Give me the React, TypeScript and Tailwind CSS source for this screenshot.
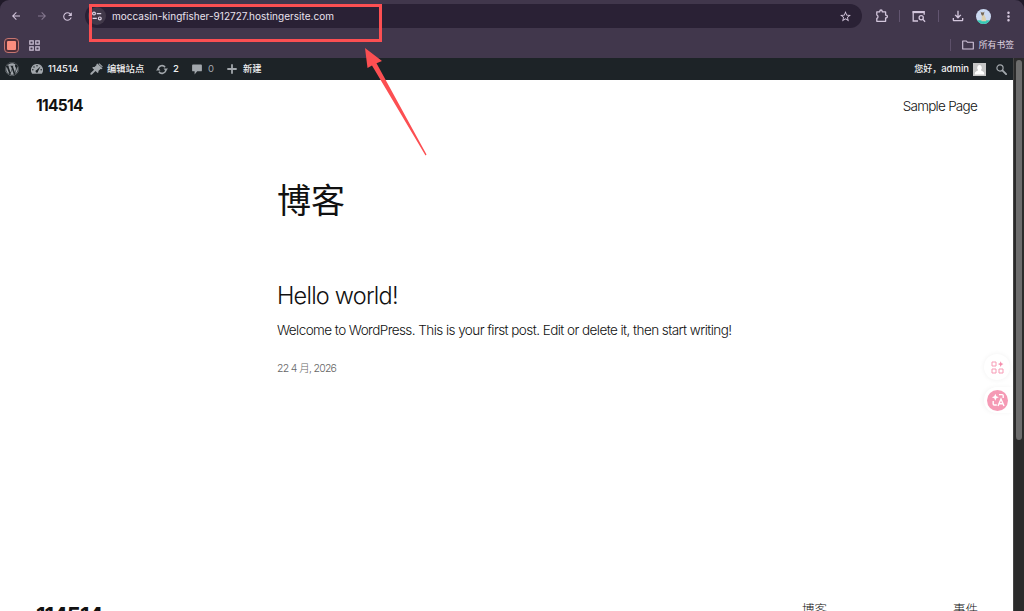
import type { ReactNode } from "react";
import { FaWordpress } from "react-icons/fa";
import {
  MdArrowBack,
  MdArrowForward,
  MdMoreVert,
  MdOutlineFileDownload,
  MdRefresh,
  MdStarBorder,
} from "react-icons/md";

const Slot = ({ className, children }: { className: string; children?: ReactNode }) => (
  <div className={`flex shrink-0 items-center justify-center ${className}`}>{children}</div>
);

const TuneIcon = () => (
  <svg width="10" height="10" viewBox="0 0 10 10" fill="none" stroke="#ddd3e4" strokeWidth="1.2">
    <circle cx="2" cy="2.6" r="1.4" />
    <path d="M4.8 2.6h4.4M.6 7.4h4.2" />
    <circle cx="7.8" cy="7.4" r="1.4" />
  </svg>
);

const ExtensionIcon = () => (
  <svg width="14" height="14" viewBox="0 0 14 14" fill="none" stroke="#d3c6dc" strokeWidth="1.3" strokeLinejoin="round">
    <path d="M1.8 2.8h3V2.2a1.2 1.2 0 0 1 2.4 0v.6h3.4v3.4h.4a1.4 1.4 0 0 1 0 2.8h-.4v3.3H1.8V9.4a1.8 1.8 0 0 0 0-3.4z" />
  </svg>
);

const SidePanelIcon = () => (
  <svg width="14" height="13" viewBox="0 0 14 13" fill="none" stroke="#d3c6dc" strokeWidth="1.3">
    <path d="M6 11H1.2V1.7h11v3" />
    <path d="M.6 2.2h11.6" strokeWidth="1.9" />
    <circle cx="9.2" cy="7.8" r="2.1" />
    <path d="M10.7 9.3l2.4 2.4" />
  </svg>
);

const AvatarIcon = () => (
  <svg width="15" height="15" viewBox="0 0 15 15">
    <clipPath id="face">
      <circle cx="7.5" cy="7.5" r="7.5" />
    </clipPath>
    <g clipPath="url(#face)">
      <rect width="15" height="15" fill="#cbd9f1" />
      <rect y="11.3" width="15" height="4" fill="#34c9b4" />
      <path d="M5.2 3.6h2.6l.4 2.2 1.6 3.4.4 3H5.4L5.8 7z" fill="#ddd0ae" />
      <path d="M4.6 2.6l1 .9h1.800l1-.9-.4 2.400-.9 1.600H6l-.9-1.600z" fill="#74685a" />
    </g>
  </svg>
);

const GridIcon = () => (
  <svg width="11" height="11" viewBox="0 0 11 11" fill="none" stroke="#cfc3d8" strokeWidth="1.2">
    <path d="M.8.8h3.4v3.4H.8zM6.8.8h3.4v3.4H6.8zM.8 6.8h3.4v3.4H.8zM6.8 6.8h3.4v3.4H6.8z" />
  </svg>
);

const FolderIcon = () => (
  <svg width="12" height="10" viewBox="0 0 12 10" fill="none" stroke="#d3c6dc" strokeWidth="1.1" strokeLinejoin="round">
    <path d="M.7 1h3.7l1.1 1.3h5.8V9H.7z" />
  </svg>
);

const DashboardIcon = () => (
  <svg width="12" height="10" viewBox="0 0 12 10">
    <path d="M6 0a6 6 0 0 1 5 9.4q-.3.4-.8.4H1.8q-.5 0-.8-.4A6 6 0 0 1 6 0z" fill="#a2a7ac" />
    <g fill="#1d2327">
      <circle cx="6" cy="1.7" r=".75" />
      <circle cx="3" cy="3" r=".75" />
      <circle cx="1.8" cy="5.8" r=".75" />
      <circle cx="10.2" cy="5.8" r=".75" />
      <path d="M9.5 2.4L7.1 7.2a1.3 1.3 0 1 1-1.5-1.1z" />
    </g>
  </svg>
);

const BrushIcon = () => (
  <svg width="13" height="12" viewBox="0 0 13 12" fill="#a2a7ac">
    <path d="M7.3.4l5.2 4.9-1 .9-1-.2-2.1 2.1.1 1.2-.9.8-2.1-2L2 11.4q-1 .6-1.5.1t.1-1.5l3.5-3.3L2.2 4.8l.9-.8 1.4.1L6.6 2 6.4 1.2z" />
    <path d="M9.3.2L12.8 3.6l-.7.7L8.5.9z" />
  </svg>
);

const UpdateIcon = () => (
  <svg width="12" height="11" viewBox="0 0 12 11">
    <path d="M2.2 5A3.8 3.8 0 0 1 9.1 3.3M9.8 6A3.8 3.8 0 0 1 2.9 7.7" fill="none" stroke="#a2a7ac" strokeWidth="1.5" />
    <path d="M7.5 4.6h4.5L9.8 7.2zM0 6.4h4.5L2.2 3.8z" fill="#a2a7ac" />
  </svg>
);

const CommentIcon = () => (
  <svg width="10" height="11" viewBox="0 0 10 11" fill="#a2a7ac">
    <path d="M1 .5h8q.9 0 .9.9v5q0 .9-.9.9H5.2L2.6 10.4V7.3H1q-.9 0-.9-.9v-5Q.1.5 1 .5z" />
  </svg>
);

const PlusIcon = () => (
  <svg width="10" height="10" viewBox="0 0 10 10" stroke="#a2a7ac" strokeWidth="1.8">
    <path d="M5 .3v9.4M.3 5h9.4" />
  </svg>
);

const SearchIcon = () => (
  <svg width="11" height="11" viewBox="0 0 11 11" fill="none" stroke="#a2a7ac">
    <circle cx="4" cy="4" r="3.1" strokeWidth="1.2" />
    <path d="M6.4 6.4l3.7 3.7" strokeWidth="1.9" strokeLinecap="round" />
  </svg>
);

const UserIcon = () => (
  <svg width="13" height="13" viewBox="0 0 13 13">
    <rect width="13" height="13" fill="#c5c5c5" />
    <path d="M6.5 2a2.4 2.8 0 0 1 1.4 5q.2 1 2.1 1.4 1.3.4 1.3 3.1H1.7q0-2.7 1.3-3.1Q4.9 8 5.1 7A2.4 2.8 0 0 1 6.5 2z" fill="#fff" />
  </svg>
);

const AppsIcon = () => (
  <svg width="13" height="13" viewBox="0 0 13 13" fill="none" stroke="#f79ab5" strokeWidth="1">
    <path d="M1 1h4v4H1zM1 8h4v4H1zM8 8h4v4H8z" strokeLinejoin="round" />
    <path d="M9.7.3l.8 2 2 .8-2 .8-.8 2-.8-2-2-.8 2-.8z" fill="#f58cab" stroke="none" />
  </svg>
);

const TranslateIcon = () => (
  <svg width="16" height="16" viewBox="0 0 16 16" fill="none" stroke="#fff" strokeWidth="1.4">
    <path d="M5.3 1.8l1.1 2.5 2.4 1-2.4 1-1.1 2.5-1-2.5-2.5-1 2.5-1z" fill="#fff" stroke="none" />
    <path d="M9 2.6h3.2q1 0 1 1V6M3.2 9v3q0 1 1 1h2.6" />
    <path d="M8 14l3-7 3 7M9.2 11.7h3.7" />
  </svg>
);

const Toolbar = () => (
  <div className="flex h-8 items-center text-[#d3c6dc]">
    <Slot className="w-8"><MdArrowBack size={12} /></Slot>
    <Slot className="w-[19px] text-[#85788f]"><MdArrowForward size={12} /></Slot>
    <Slot className="w-[31px] pl-px"><MdRefresh size={13} /></Slot>
    <div className="ml-[3px] flex h-6 w-[777px] shrink-0 items-center rounded-full bg-[#2a2135]">
      <Slot className="ml-[3px] size-[18px] rounded-full bg-[#413849]"><TuneIcon /></Slot>
      <span className="ml-1.5 text-[10px] leading-4 tracking-[0.02px] whitespace-nowrap text-[#e9e1ee]">
        moccasin-kingfisher-912727.hostingersite.com
      </span>
      <MdStarBorder size={13} className="mr-2.5 ml-auto" />
    </div>
    <Slot className="ml-[5px] w-[30px]"><ExtensionIcon /></Slot>
    <div className="ml-0.5 h-3 w-px bg-[#625570]" />
    <Slot className="w-[38px]"><SidePanelIcon /></Slot>
    <div className="h-3 w-px bg-[#625570]" />
    <Slot className="w-[37px]"><MdOutlineFileDownload size={16} /></Slot>
    <Slot className="w-[15px]"><AvatarIcon /></Slot>
    <Slot className="w-[33px] pl-0.5"><MdMoreVert size={15} /></Slot>
  </div>
);

const Bookmarks = () => (
  <div className="flex h-[26px] items-center">
    <Slot className="ml-1 size-[15px] rounded-[4px] border border-[#c57570] bg-[#512f39]">
      <div className="size-[9px] rounded-[1px] bg-[#fb8d7e]" />
    </Slot>
    <Slot className="ml-2.5 w-[11px]"><GridIcon /></Slot>
    <div className="mr-[11px] ml-auto h-3 w-px bg-[#5d506a]" />
    <FolderIcon />
    <span className="mr-2.5 ml-[5px] text-[8.8px] leading-3 whitespace-nowrap text-[#e0d8e5]">所有书签</span>
  </div>
);

const AdminBar = () => (
  <div className="flex h-[22px] items-center bg-[#1d2327] text-[9.3px] leading-3 font-medium text-[#f0f0f1]">
    <Slot className="w-6 text-[#a2a7ac]"><FaWordpress size={14} /></Slot>
    <Slot className="ml-[7px] w-3"><DashboardIcon /></Slot>
    <span className="ml-[5px] w-[31px] text-[9.5px]">114514</span>
    <Slot className="ml-[11px] w-[13px]"><BrushIcon /></Slot>
    <span className="ml-1 w-[39px] whitespace-nowrap">编辑站点</span>
    <Slot className="ml-2.5 w-3"><UpdateIcon /></Slot>
    <span className="ml-[5px] w-1.5 text-[9.5px]">2</span>
    <Slot className="ml-[13px] w-2.5"><CommentIcon /></Slot>
    <span className="ml-1.5 w-1.5 text-[9.5px] font-normal text-[#a2a7ac]">0</span>
    <Slot className="ml-[13px] w-2.5"><PlusIcon /></Slot>
    <span className="ml-1.5 whitespace-nowrap">新建</span>
    <span className="ml-auto whitespace-nowrap text-[9px]">您好，<span className="text-[9.5px]">admin</span></span>
    <Slot className="ml-1 w-[13px]"><UserIcon /></Slot>
    <Slot className="mr-1.5 ml-2.5 w-[11px]"><SearchIcon /></Slot>
  </div>
);

const BlogPage = () => (
  <main className="flex h-[531px] flex-col overflow-hidden bg-white text-[#111]">
    <header className="flex h-[51px] shrink-0 items-center justify-between pt-px pr-9 pl-9">
      <span className="text-[15.5px] font-bold tracking-[-0.7px]">114514</span>
      <span className="text-[13.5px] font-light tracking-[-0.75px]">Sample Page</span>
    </header>
    <article className="ml-[277px] flex h-[466px] shrink-0 flex-col items-start whitespace-nowrap">
      <h1 className="mt-[46px] text-[34px] leading-[48px]">博客</h1>
      <h2 className="mt-14 text-[23.5px] leading-[30px] font-light tracking-[-0.78px]">Hello world!</h2>
      <p className="mt-[9px] text-[13.5px] leading-5 font-light tracking-[-0.56px]">
        Welcome to WordPress. This is your first post. Edit or delete it, then start writing!
      </p>
      <p className="mt-[21px] text-[10.5px] leading-4 font-light tracking-[-0.8px] text-[#666] [word-spacing:0.4px]">
        22 4 月, 2026
      </p>
    </article>
    <footer className="flex shrink-0 items-start pl-9">
      <span className="mt-1 w-[766px] text-[22px] leading-7 font-bold tracking-[-1px]">114514</span>
      <span className="mt-[3px] w-[151px] text-[12.5px] leading-5 font-light">博客</span>
      <span className="mt-[3px] text-[12.5px] leading-5 font-light">事件</span>
    </footer>
  </main>
);

const App = () => (
  <div className="relative h-[611px] w-[1024px] overflow-hidden bg-[#201a29] font-['Inter','Noto_Sans_CJK_SC',sans-serif]">
    <div className="rounded-t-[9px] bg-[#41374c]">
      <Toolbar />
      <Bookmarks />
    </div>
    <div className="flex">
      <div className="w-[1013px]">
        <AdminBar />
        <BlogPage />
      </div>
      <div className="flex h-[553px] w-[11px] justify-center border-l border-[#454545] bg-[#2b2b2b] pt-0.5">
        <div className="h-[380px] w-1.5 rounded-full bg-[#6d6d6d]" />
      </div>
    </div>

    {/* Floating assistant buttons */}
    <div className="absolute top-[354px] left-[984px] flex size-[26px] items-center justify-center rounded-full bg-white shadow-[0_0_5px_rgba(0,0,0,0.06)]">
      <AppsIcon />
    </div>
    <div className="absolute top-[387px] left-[984px] flex h-[26px] w-[29px] items-center rounded-l-full bg-white pl-[3px] shadow-[-2px_0_4px_rgba(0,0,0,0.04)]">
      <Slot className="size-[21px] rounded-full bg-[#f59ab5]"><TranslateIcon /></Slot>
    </div>

    {/* Address highlight and arrow */}
    <div className="absolute top-1 left-[89px] h-[38px] w-[293px] border-3 border-[#fc4f52]" />
    <svg className="absolute top-[47px] left-[364px]" width="64" height="110" viewBox="0 0 64 110">
      <path d="M1 1l17 13-5.5 2.3L62.5 107.5 61.5 108.5 8 18.5 3.500 21z" fill="#fc4f52" />
    </svg>
  </div>
);

export default App;
